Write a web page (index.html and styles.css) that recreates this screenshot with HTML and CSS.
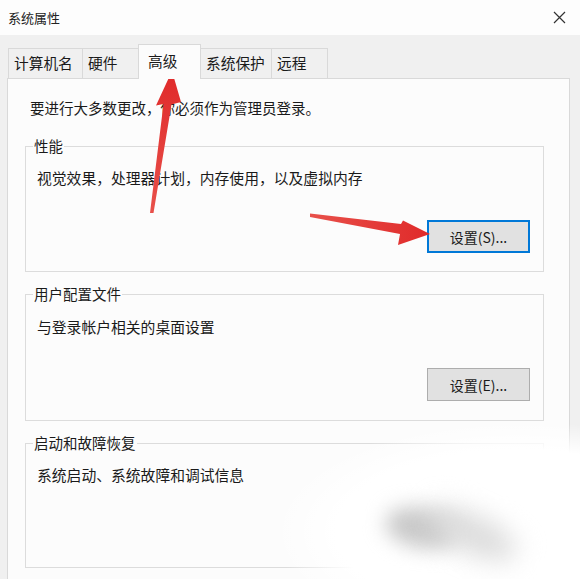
FILE: index.html
```html
<!DOCTYPE html>
<html lang="zh-CN">
<head>
<meta charset="utf-8">
<title>系统属性</title>
<link rel="stylesheet" href="styles.css">
</head>
<body>
<div class="window">
  <header class="titlebar">
    <span class="title">系统属性</span>
    <svg class="close" width="13" height="13" viewBox="0 0 13 13"><path d="M1 1 L12 12 M12 1 L1 12" stroke="#333" stroke-width="1.2" fill="none"/></svg>
  </header>
  <div class="content">
    <div class="tabs">
      <div class="tab t1">计算机名</div>
      <div class="tab t2">硬件</div>
      <div class="tab t3 active">高级</div>
      <div class="tab t4">系统保护</div>
      <div class="tab t5">远程</div>
    </div>
    <div class="panel">
      <p class="note">要进行大多数更改，你必须作为管理员登录。</p>
      <fieldset class="group g1">
        <legend>性能</legend>
        <p class="desc">视觉效果，处理器计划，内存使用，以及虚拟内存</p>
        <div class="actions a1"><button class="btn focused">设置(S)...</button></div>
      </fieldset>
      <fieldset class="group g2">
        <legend>用户配置文件</legend>
        <p class="desc">与登录帐户相关的桌面设置</p>
        <div class="actions a2"><button class="btn">设置(E)...</button></div>
      </fieldset>
      <fieldset class="group g3">
        <legend>启动和故障恢复</legend>
        <p class="desc">系统启动、系统故障和调试信息</p>
      </fieldset>
    </div>
  </div>
  <div class="watermark"></div>
  <div class="smudge s1"></div>
  <div class="smudge s2"></div>
  <svg class="arrows" width="580" height="579" viewBox="0 0 580 579">
    <defs>
      <linearGradient id="r1" x1="0" y1="1" x2="0" y2="0">
        <stop offset="0" stop-color="#e8504a"/>
        <stop offset="1" stop-color="#e02a2a"/>
      </linearGradient>
      <linearGradient id="r2" x1="0" y1="0" x2="1" y2="0">
        <stop offset="0" stop-color="#e8504a"/>
        <stop offset="1" stop-color="#e02a2a"/>
      </linearGradient>
    </defs>
    <polygon fill="url(#r1)" points="150,213 163.5,104 156,105.5 172,71 181,102 171.5,104.5 153.5,213"/>
    <polygon fill="url(#r2)" points="310,213.5 401,224 403,220.5 430,234 398,245 400,234 310,217"/>
  </svg>
</div>
</body>
</html>
```

FILE: styles.css
```css
* { box-sizing: border-box; }

html, body {
  margin: 0;
  padding: 0;
  background: #f0f0f0;
}

body {
  font-family: "Noto Sans CJK SC", "Noto Sans", sans-serif;
  color: #1a1a1a;
}

.window {
  position: relative;
  width: 580px;
  height: 579px;
  overflow: hidden;
  background: #f0f0f0;
}

.titlebar {
  height: 35px;
  background: #fdfdfd;
  display: flex;
  align-items: center;
  justify-content: space-between;
  padding: 0 14px 0 8px;
}

.title {
  font-size: 13px;
  line-height: 20px;
  color: #222;
}

.close {
  display: block;
}

.content {
  padding: 9px 10px 0 7px;
}

.tabs {
  display: flex;
  align-items: flex-end;
  height: 34px;
  padding-left: 1px;
}

.tab {
  height: 30px;
  border: 1px solid #d9d9d9;
  border-bottom: none;
  background: #f0f0f0;
  font-size: 14.7px;
  line-height: 28px;
  padding-left: 5px;
  white-space: nowrap;
  color: #1a1a1a;
}

.tab + .tab { margin-left: -1px; }

.t1 { width: 75px; }
.t2 { width: 57px; }
.t3 { width: 63px; }
.t4 { width: 72px; }
.t5 { width: 57px; }

.tab.active {
  height: 35px;
  margin-bottom: -1px;
  background: #fcfcfc;
  position: relative;
  z-index: 1;
  padding-left: 9px;
  line-height: 32px;
}

.panel {
  width: 563px;
  height: 520px;
  background: #fcfcfc;
  border: 1px solid #d9d9d9;
  padding: 19px 25px 0 17px;
}

.note {
  margin: 0 0 0 5px;
  font-size: 14.5px;
  line-height: 20px;
}

.group {
  margin: 0;
  border: 1px solid #dcdcdc;
  padding: 12px 13px 18px 11px;
  min-width: 0;
}

.group legend {
  font-size: 14.5px;
  line-height: 20px;
  padding: 0 1px;
  margin-left: -4px;
}

.g1 { margin-top: 18px; }
.g2 { margin-top: 12px; padding-top: 13px; padding-bottom: 19px; }
.g3 { margin-top: 12px; padding-bottom: 82px; }

.desc {
  margin: 0;
  font-size: 14.8px;
  line-height: 20px;
}

.actions {
  display: flex;
  justify-content: flex-end;
}

.a1 { margin-top: 32px; }
.a2 { margin-top: 31px; }

.btn {
  width: 103px;
  height: 33px;
  background: #e1e1e1;
  border: 1px solid #adadad;
  font-family: "Noto Sans CJK SC", "Noto Sans", sans-serif;
  font-size: 14px;
  color: #1a1a1a;
  padding: 0;
}

.btn.focused {
  border: 2px solid #0078d7;
}

.watermark {
  position: absolute;
  left: 270px;
  top: 420px;
  width: 330px;
  height: 180px;
  background: radial-gradient(ellipse at 75% 62%, rgba(255,255,255,1) 52%, rgba(255,255,255,0) 70%);
}

.smudge {
  position: absolute;
  border-radius: 50%;
}

.s1 {
  left: 385px;
  top: 508px;
  width: 75px;
  height: 40px;
  filter: blur(10px);
  transform: rotate(10deg);
  background: #c8c8c8;
}

.s2 {
  left: 425px;
  top: 515px;
  width: 95px;
  height: 38px;
  filter: blur(13px);
  transform: rotate(25deg);
  background: #dcdcdc;
}

.arrows {
  position: absolute;
  left: 0;
  top: 0;
  pointer-events: none;
}
```
